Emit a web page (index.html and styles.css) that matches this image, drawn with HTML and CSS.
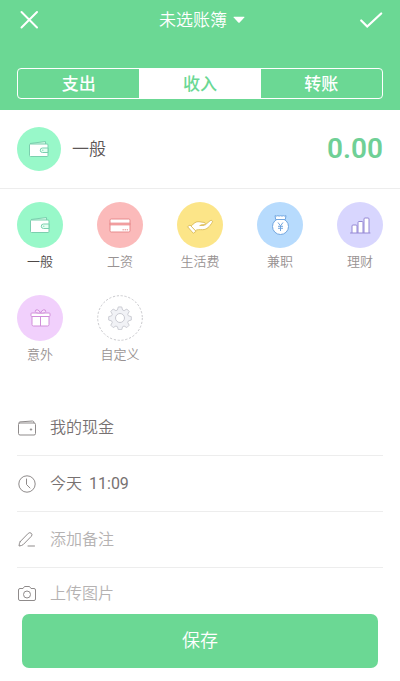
FILE: index.html
```html
<!DOCTYPE html>
<html lang="zh-CN">
<head>
<meta charset="utf-8">
<meta name="viewport" content="width=device-width, initial-scale=1">
<title>记一笔</title>
<link rel="stylesheet" href="styles.css">
</head>
<body>
<svg class="symbols" aria-hidden="true">
  <symbol id="wallet" viewBox="0 0 24 24">
    <path d="M3 6.500 18.500 4.500V7.500" fill="#d5fbe8" stroke="#7bcfae"/>
    <rect x="2.500" y="7" width="18.500" height="12.500" rx="1" fill="#fff" stroke="#7bcfae"/>
    <path d="M21 11h-5.500a2 2 0 0 0 0 4.500H21z" fill="#e4fff2" stroke="#7bcfae"/>
    <circle cx="15.800" cy="13.200" r=".6" fill="#7bcfae"/>
  </symbol>
</svg>
<form class="app">
  <header class="header">
    <div class="topbar">
      <button class="icon-button" type="button" aria-label="关闭">
        <svg width="24" height="24" viewBox="0 0 24 24"><path d="M4.500 4 20 19.500M20 4 4.500 19.500" fill="none" stroke="#fff" stroke-width="2" stroke-linecap="round"/></svg>
      </button>
      <button class="book" type="button">未选账簿
        <svg width="12" height="8" viewBox="0 0 12 8"><path d="M1 .7h10q1 0 .3.800L6.700 6.500q-.7.700-1.400 0L.7 1.500Q0 .7 1 .7z" fill="#fff"/></svg>
      </button>
      <button class="icon-button" type="button" aria-label="完成">
        <svg width="24" height="24" viewBox="0 0 24 24"><path d="M2.200 12.500 8.200 18.500 22.200 5.500" fill="none" stroke="#fff" stroke-width="2.200" stroke-linecap="round"/></svg>
      </button>
    </div>
    <nav class="tabs">
      <button class="tab" type="button">支出</button>
      <button class="tab active" type="button">收入</button>
      <button class="tab" type="button">转账</button>
    </nav>
  </header>

  <main class="content">
    <section class="amount">
      <span class="disc mint small"><svg width="24" height="24"><use href="#wallet"/></svg></span>
      <span class="amount-name">一般</span>
      <output class="amount-value">0.00</output>
    </section>

    <section class="categories">
      <button class="category selected" type="button">
        <span class="disc mint"><svg width="24" height="24"><use href="#wallet"/></svg></span>一般
      </button>
      <button class="category" type="button">
        <span class="disc red"><svg width="24" height="24" viewBox="0 0 24 24">
          <rect x="2" y="6" width="20" height="13" rx="1.200" fill="#fff" stroke="#e88a8c"/>
          <path d="M2 10h20v2H2z" fill="#f6aaaa" stroke="#e88a8c" stroke-width=".7"/>
          <path d="M14.500 16.800h5.500" stroke="#e88a8c" stroke-dasharray="1.400 .7"/>
        </svg></span>工资
      </button>
      <button class="category" type="button">
        <span class="disc yellow"><svg width="28" height="24" viewBox="0 0 28 24">
          <path d="M5 13.200C8 10 10 8.300 13 8.700l5 .7c1.800.3 1.800 2.400 0 2.500l-3.500.3 4.800-.4 4.700-4c1.300-1 3.200-.2 2.400 1.300-2.800 4.600-5.400 7.500-9.900 7.600-3.300 0-5-.4-7.500 1z" fill="#fff" stroke="#dfc263" stroke-linejoin="round"/>
          <path d="m4 12-2.500 1.700 5.800 6.600 2.700-2z" fill="#fff" stroke="#dfc263" stroke-linejoin="round"/>
          <path d="m13.500 12.600 4.500-.4" stroke="#dfc263"/>
        </svg></span>生活费
      </button>
      <button class="category" type="button">
        <span class="disc blue"><svg width="24" height="24" viewBox="0 0 24 24">
          <circle cx="12.500" cy="13.500" r="8" fill="#fff" stroke="#72a6df"/>
          <path d="M7 2.700q1.400.8 2.800 0 1.400.8 2.800 0 1.400.8 2.800 0 1.400.8 2.600 0L17.300 6.500H7.700z" fill="#fff" stroke="#72a6df" stroke-linejoin="round"/>
          <path d="m10 9.500 2.500 3.400L15 9.500M12.500 13v5M10 13.300h5M10 15.300h5" fill="none" stroke="#72a6df"/>
        </svg></span>兼职
      </button>
      <button class="category" type="button">
        <span class="disc violet"><svg width="24" height="24" viewBox="0 0 24 24">
          <path d="M4 20v-7q0-1 1-1h3q1 0 1 1v7M10 20V9.500q0-1 1-1h3q1 0 1 1V20M16 20V6q0-1 1-1h3q1 0 1 1v14" fill="#fff" stroke="#9588d4"/>
          <path d="M2.500 20h19.500" stroke="#9588d4" stroke-linecap="round"/>
        </svg></span>理财
      </button>
      <button class="category" type="button">
        <span class="disc pink"><svg width="24" height="24" viewBox="0 0 24 24">
          <path d="M4 10.500h17v8q0 1.500-1.500 1.500h-14Q4 20 4 18.500z" fill="#fff" stroke="#d18fda"/>
          <rect x="3" y="7" width="19" height="3.500" rx=".8" fill="#fff" stroke="#d18fda"/>
          <path d="M12.500 10.500V20M12.500 7Q7.500 7.300 7.300 5.500 7.300 3.300 9.500 3.800 11.500 4.500 12.500 7 13.500 4.500 15.500 3.800 17.700 3.300 17.700 5.500 17.500 7.300 12.500 7z" fill="#f9e1fc" stroke="#d18fda"/>
        </svg></span>意外
      </button>
      <button class="category" type="button">
        <span class="disc custom">
          <svg class="ring" viewBox="0 0 46 46"><circle cx="23" cy="23" r="22.300" fill="none" stroke="#c9c9cd" stroke-dasharray="2.200 1.690"/></svg>
          <svg width="24" height="24" viewBox="0 0 24 24">
            <path d="M10.200 1h3.600l.9 3.200 1.600.7 2.900-1.700 2.500 2.600-1.600 2.900.7 1.600 3.100.9v3.600l-3.100.9-.7 1.600 1.600 2.900-2.500 2.500-2.900-1.600-1.600.7-.9 3.100h-3.600l-.9-3.100-1.600-.7-2.900 1.600-2.500-2.500 1.600-2.900-.7-1.600-3.100-.9v-3.600l3.100-.9.7-1.600-1.600-2.900 2.500-2.600 2.900 1.700 1.600-.7z" transform="translate(.6 0) scale(.95)" fill="#f1f2f6" stroke="#c9cad2" stroke-linejoin="round"/>
            <circle cx="12" cy="12" r="4.500" fill="#fff" stroke="#c9cad2"/>
          </svg>
        </span>自定义
      </button>
    </section>

    <section class="details">
      <button class="row" type="button">
        <svg width="20" height="20" viewBox="0 0 20 20" fill="none" stroke="#8f8b8b"><rect x="1.500" y="5" width="17" height="12" rx="1.500"/><path d="M1.800 5.500Q1.700 4 3 3.900L15.500 3q1.500 0 1.500 2"/><circle cx="14" cy="11.500" r=".7" fill="#8f8b8b"/></svg>
        我的现金
      </button>
      <button class="row" type="button">
        <svg width="20" height="20" viewBox="0 0 20 20" fill="none" stroke="#8f8b8b"><circle cx="10" cy="10" r="8.200"/><path d="M9.500 5v5.500l3.500 3.500" stroke-linecap="round"/></svg>
        <span>今天</span><time>11:09</time>
      </button>
      <label class="row">
        <svg width="20" height="20" viewBox="0 0 20 20" fill="none" stroke="#8f8b8b" stroke-linecap="round" stroke-linejoin="round"><path d="m3.300 11.500 8-8.200q1.500-1.300 3 0 1.500 1.500 0 3L6.300 14.500q-1.500 1.300-4.300 1.500.2-3 1.300-4.500zM11 16h6.500"/></svg>
        <input class="note" type="text" placeholder="添加备注" aria-label="添加备注">
      </label>
      <button class="row muted" type="button">
        <svg width="20" height="20" viewBox="0 0 20 20" fill="none" stroke="#8f8b8b"><path d="M3 4.500h3l1.500-2h5l1.500 2h3q1.500 0 1.500 1.500v9q0 1.500-1.500 1.500H3q-1.500 0-1.500-1.500V6Q1.500 4.500 3 4.500z" stroke-linejoin="round"/><circle cx="10" cy="10.500" r="3.500"/></svg>
        上传图片
      </button>
    </section>
  </main>

  <footer class="footer"><button class="save" type="button">保存</button></footer>
</form>
</body>
</html>
```
FILE: styles.css
```css
* {
  box-sizing: border-box;
}

body {
  margin: 0;
  background: #fff;
  color: #5c5656;
  font-family: Roboto, "Noto Sans CJK SC", sans-serif;
  font-size: 16px;
  font-weight: 350;
  line-height: 24px;
}

button,
input {
  margin: 0;
  padding: 0;
  border: 0;
  background: none;
  color: inherit;
  font: inherit;
}

svg {
  display: block;
  flex: none;
}

.symbols {
  position: absolute;
  width: 0;
  height: 0;
}

.app {
  display: flex;
  flex-direction: column;
  height: 100vh;
}

.header {
  flex: none;
  padding-bottom: 11px;
  background: #6bd894;
  color: #fff;
}

.topbar {
  display: flex;
  align-items: center;
  justify-content: space-between;
  height: 40px;
  padding: 0 17px;
}

.icon-button {
  width: 24px;
  height: 24px;
}

.book {
  display: flex;
  align-items: center;
  gap: 6px;
  padding-left: 4px;
  font-size: 17px;
}

.tabs {
  display: grid;
  grid-template-columns: repeat(3, 1fr);
  height: 31px;
  margin: 28px 17px 0;
  overflow: hidden;
  border: 1px solid #fff;
  border-radius: 4px;
}

.tab {
  font-size: 17px;
  font-weight: 500;
  line-height: 28px;
}

.tab.active {
  background: #fff;
  color: #6bd894;
}

.content {
  flex: 1;
  min-height: 0;
  overflow-y: auto;
  scrollbar-width: none;
}

.amount {
  display: flex;
  align-items: center;
  height: 79px;
  padding: 0 17px;
  border-bottom: 1px solid #ededed;
}

.amount-name {
  margin-left: 11px;
  font-size: 17px;
}

.amount-value {
  margin-left: auto;
  color: #6fd096;
  font-size: 28px;
  font-weight: 600;
}

.disc {
  display: grid;
  place-items: center;
  width: 46px;
  height: 46px;
  border-radius: 50%;
}

.small {
  width: 44px;
  height: 44px;
}

.mint {
  background: #98f8c9;
}

.red {
  background: #fbbaba;
}

.yellow {
  background: #fce588;
}

.blue {
  background: #b7dbfd;
}

.violet {
  background: #d8d6fe;
}

.pink {
  background: #f1d0fc;
}

.custom > svg {
  grid-area: 1 / 1;
}

.ring {
  width: 46px;
  height: 46px;
}

.categories {
  display: grid;
  grid-template-columns: repeat(5, 1fr);
  row-gap: 23px;
  padding: 13px 0 35px;
}

.category {
  display: flex;
  flex-direction: column;
  align-items: center;
  gap: 4px;
  color: #989292;
  font-size: 13px;
  line-height: 20px;
}

.selected {
  color: #4e4848;
}

.details {
  padding: 0 17px;
}

.row {
  display: flex;
  align-items: center;
  gap: 13px;
  width: 100%;
  height: 56px;
  border-bottom: 1px solid #ededed;
  color: #777171;
  text-align: left;
}

.row:last-child {
  height: 52px;
  border-bottom: 0;
}

.row time {
  margin-left: -6px;
  font-weight: 400;
}

.row.muted {
  color: #b5b2b2;
}

.note {
  flex: 1;
  min-width: 0;
  outline: none;
}

.note::placeholder {
  color: #b5b2b2;
  opacity: 1;
}

.footer {
  flex: none;
  padding: 13px 22px;
  background: #fff;
}

.save {
  display: block;
  width: 100%;
  height: 54px;
  border-radius: 7px;
  background: #6bd894;
  color: #fff;
  font-size: 18px;
}
```
